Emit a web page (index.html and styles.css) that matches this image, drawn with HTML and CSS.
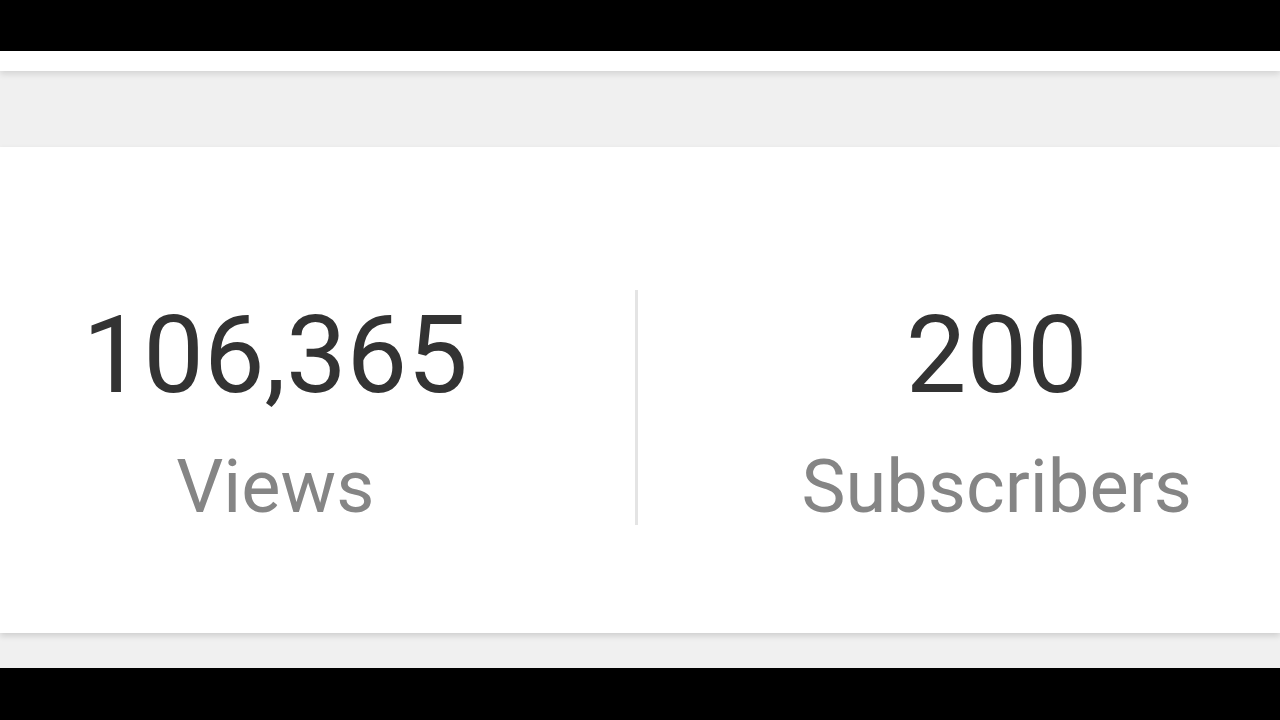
FILE: index.html
```html
<!DOCTYPE html>
<html lang="en">
<head>
    <meta charset="UTF-8">
    <meta name="viewport" content="width=device-width, initial-scale=1.0">
    <title>Channel stats</title>
    <link rel="stylesheet" href="styles.css">
</head>
<body>
    <div class="letterbox"></div>
    <div class="screen">
        <div class="header"></div>
        <div class="band"></div>
        <div class="card">
            <div class="stats">
                <div class="stat">
                    <div class="stat-value">106,365</div>
                    <div class="stat-label">Views</div>
                </div>
                <div class="divider"></div>
                <div class="stat">
                    <div class="stat-value">200</div>
                    <div class="stat-label">Subscribers</div>
                </div>
            </div>
        </div>
    </div>
    <div class="letterbox bottom"></div>
</body>
</html>
```

FILE: styles.css
```css
body {
    margin: 0;
    padding: 0;
    background-color: #000;
    font-family: Roboto, 'Liberation Sans', sans-serif;
    height: 720px;
    overflow: hidden;
}

.letterbox {
    height: 51px;
    background-color: #000;
}

.letterbox.bottom {
    height: 52px;
}

.screen {
    height: 617px;
    background-color: #f0f0f0;
    overflow: hidden;
}

.header {
    position: relative;
    z-index: 1;
    height: 20px;
    background-color: #fff;
    box-shadow: 0 3px 6px rgba(0, 0, 0, 0.12);
}

.band {
    height: 76px;
}

.card {
    height: 486px;
    background-color: #fff;
    box-shadow: 0 3px 6px rgba(0, 0, 0, 0.14);
    overflow: hidden;
}

.stats {
    display: flex;
    width: 1440px;
    margin-left: -84px;
    margin-top: 143px;
    height: 235px;
}

.stat {
    flex: 1;
    display: flex;
    flex-direction: column;
    align-items: center;
    padding-top: 11px;
}

.divider {
    width: 3px;
    background-color: #e4e4e4;
}

.stat-value {
    font-size: 108px;
    line-height: 108px;
    color: #333;
}

.stat-label {
    margin-top: 41px;
    font-size: 74px;
    line-height: 74px;
    color: #858585;
}
```
